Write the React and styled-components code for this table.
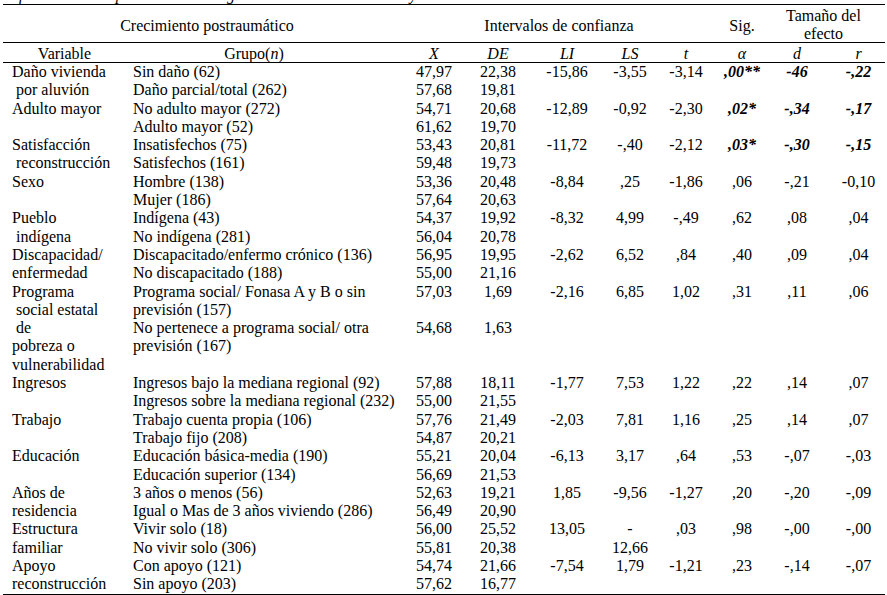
import React from "react";
import styled, { createGlobalStyle } from "styled-components";

const GlobalStyle = createGlobalStyle`
	*, *::before, *::after {
		box-sizing: border-box;
	}

	body {
		margin: 0;
		background-color: #fff;
		color: #000;
		font-family: "Liberation Serif", "Times New Roman", serif;
		font-size: 16px;
	}
`;

const COLS = "270px 76px 52px 86px 40px 72px 40px 70px 53px";

const Page = styled.div`
	margin-left: 3px;
	width: 882px;
`;

// only the descenders of the caption line are visible above the table
const Caption = styled.div`
	font-style: italic;
	height: 4px;
	overflow: hidden;
	position: relative;
	white-space: nowrap;

	span {
		left: 0;
		line-height: 16px;
		position: absolute;
		top: -13px;
	}
`;

const Table = styled.div`
	border-bottom: 1px solid #000;
	border-top: 1px solid #000;
`;

const TopHead = styled.div`
	border-bottom: 1px solid #000;
	display: grid;
	grid-template-columns: 123px ${COLS};
	height: 38px;
`;

const GroupTitle = styled.div`
	align-items: ${(p) => (p.$top ? "flex-start" : "center")};
	display: flex;
	grid-column: span ${(p) => p.$span || 1};
	justify-content: center;
	line-height: 17.5px;
	padding-left: ${(p) => p.$shift || 0}px;
	padding-top: ${(p) => (p.$top ? 2 : 4)}px;
	text-align: center;
`;

const ColHead = styled.div`
	border-bottom: 1px solid #000;
	display: grid;
	grid-template-columns: 123px ${COLS};
	height: 20px;
	line-height: 17px;
`;

const HeadCell = styled.div`
	font-style: ${(p) => (p.$italic ? "italic" : "normal")};
	padding-right: ${(p) => p.$pad || 0}px;
	padding-top: 2px;
	text-align: center;
`;

const Block = styled.div`
	display: flex;
	line-height: 18.3px;
`;

const VarCell = styled.div`
	flex-shrink: 0;
	padding-left: 9px;
	white-space: pre;
	width: 123px;
`;

const Groups = styled.div`
	display: flex;
	flex: 1;
	flex-direction: column;
`;

const GroupRow = styled.div`
	display: grid;
	grid-template-columns: ${COLS};
`;

const GroupName = styled.div`
	padding-left: 7px;
	white-space: nowrap;
`;

const Num = styled.div`
	font-style: ${(p) => (p.$strong ? "italic" : "normal")};
	font-weight: ${(p) => (p.$strong ? "bold" : "normal")};
	text-align: center;
	white-space: nowrap;
`;

const rows = [
	{
		variable: ["Daño vivienda", " por aluvión"],
		groups: [
			{ name: ["Sin daño (62)"], values: ["47,97", "22,38", "-15,86", "-3,55", "-3,14", ",00**", "-46", "-,22"], sig: true },
			{ name: ["Daño parcial/total (262)"], values: ["57,68", "19,81"] },
		],
	},
	{
		variable: ["Adulto mayor"],
		groups: [
			{ name: ["No adulto mayor (272)"], values: ["54,71", "20,68", "-12,89", "-0,92", "-2,30", ",02*", "-,34", "-,17"], sig: true },
			{ name: ["Adulto mayor (52)"], values: ["61,62", "19,70"] },
		],
	},
	{
		variable: ["Satisfacción", " reconstrucción"],
		groups: [
			{ name: ["Insatisfechos (75)"], values: ["53,43", "20,81", "-11,72", "-,40", "-2,12", ",03*", "-,30", "-,15"], sig: true },
			{ name: ["Satisfechos (161)"], values: ["59,48", "19,73"] },
		],
	},
	{
		variable: ["Sexo"],
		groups: [
			{ name: ["Hombre (138)"], values: ["53,36", "20,48", "-8,84", ",25", "-1,86", ",06", "-,21", "-0,10"] },
			{ name: ["Mujer (186)"], values: ["57,64", "20,63"] },
		],
	},
	{
		variable: ["Pueblo", " indígena"],
		groups: [
			{ name: ["Indígena (43)"], values: ["54,37", "19,92", "-8,32", "4,99", "-,49", ",62", ",08", ",04"] },
			{ name: ["No indígena (281)"], values: ["56,04", "20,78"] },
		],
	},
	{
		variable: ["Discapacidad/", "enfermedad"],
		groups: [
			{ name: ["Discapacitado/enfermo crónico (136)"], values: ["56,95", "19,95", "-2,62", "6,52", ",84", ",40", ",09", ",04"] },
			{ name: ["No discapacitado (188)"], values: ["55,00", "21,16"] },
		],
	},
	{
		variable: ["Programa", " social estatal", " de", "pobreza o", "vulnerabilidad"],
		groups: [
			{ name: ["Programa social/ Fonasa A y B o sin", "previsión (157)"], values: ["57,03", "1,69", "-2,16", "6,85", "1,02", ",31", ",11", ",06"] },
			{ name: ["No pertenece a programa social/ otra", "previsión (167)"], values: ["54,68", "1,63"] },
		],
	},
	{
		variable: ["Ingresos"],
		groups: [
			{ name: ["Ingresos bajo la mediana regional (92)"], values: ["57,88", "18,11", "-1,77", "7,53", "1,22", ",22", ",14", ",07"] },
			{ name: ["Ingresos sobre la mediana regional (232)"], values: ["55,00", "21,55"] },
		],
	},
	{
		variable: ["Trabajo"],
		groups: [
			{ name: ["Trabajo cuenta propia (106)"], values: ["57,76", "21,49", "-2,03", "7,81", "1,16", ",25", ",14", ",07"] },
			{ name: ["Trabajo fijo (208)"], values: ["54,87", "20,21"] },
		],
	},
	{
		variable: ["Educación"],
		groups: [
			{ name: ["Educación básica-media (190)"], values: ["55,21", "20,04", "-6,13", "3,17", ",64", ",53", "-,07", "-,03"] },
			{ name: ["Educación superior (134)"], values: ["56,69", "21,53"] },
		],
	},
	{
		variable: ["Años de", "residencia"],
		groups: [
			{ name: ["3 años o menos (56)"], values: ["52,63", "19,21", "1,85", "-9,56", "-1,27", ",20", "-,20", "-,09"] },
			{ name: ["Igual o Mas de 3 años viviendo (286)"], values: ["56,49", "20,90"] },
		],
	},
	{
		variable: ["Estructura", "familiar"],
		groups: [
			{ name: ["Vivir solo (18)"], values: ["56,00", "25,52", "13,05", "-", ",03", ",98", "-,00", "-,00"] },
			{ name: ["No vivir solo (306)"], values: ["55,81", "20,38", "", "12,66"] },
		],
	},
	{
		variable: ["Apoyo", "reconstrucción"],
		groups: [
			{ name: ["Con apoyo (121)"], values: ["54,74", "21,66", "-7,54", "1,79", "-1,21", ",23", "-,14", "-,07"] },
			{ name: ["Sin apoyo (203)"], values: ["57,62", "16,77"] },
		],
	},
];

const App = () => {
	return (
		<>
			<GlobalStyle />
			<Page>
				<Caption>
					<span>Diferencias en el promedio total según variables de la muestra y de la reconstrucción</span>
				</Caption>
				<Table>
					<TopHead>
						<GroupTitle $span={2} $shift={15}>
							Crecimiento postraumático
						</GroupTitle>
						<GroupTitle $span={5}>Intervalos de confianza</GroupTitle>
						<GroupTitle>Sig.</GroupTitle>
						<GroupTitle $span={2} $top>
							Tamaño del
							<br />
							efecto
						</GroupTitle>
					</TopHead>

					<ColHead>
						<HeadCell>Variable</HeadCell>
						<HeadCell $pad={14}>
							Grupo(<i>n</i>)
						</HeadCell>
						<HeadCell $italic>X</HeadCell>
						<HeadCell $italic>DE</HeadCell>
						<HeadCell $italic>LI</HeadCell>
						<HeadCell $italic>LS</HeadCell>
						<HeadCell $italic>t</HeadCell>
						<HeadCell $italic>α</HeadCell>
						<HeadCell $italic>d</HeadCell>
						<HeadCell $italic>r</HeadCell>
					</ColHead>

					{rows.map((row) => (
						<Block key={row.variable.join("")}>
							<VarCell>{row.variable.join("\n")}</VarCell>
							<Groups>
								{row.groups.map((group) => (
									<GroupRow key={group.name.join("")}>
										<GroupName>
											{group.name.map((line) => (
												<div key={line}>{line}</div>
											))}
										</GroupName>
										{Array.from({ length: 8 }).map((_, i) => (
											<Num key={i} $strong={group.sig && i >= 5}>
												{group.values[i] || ""}
											</Num>
										))}
									</GroupRow>
								))}
							</Groups>
						</Block>
					))}
				</Table>
			</Page>
		</>
	);
};

export default App;
